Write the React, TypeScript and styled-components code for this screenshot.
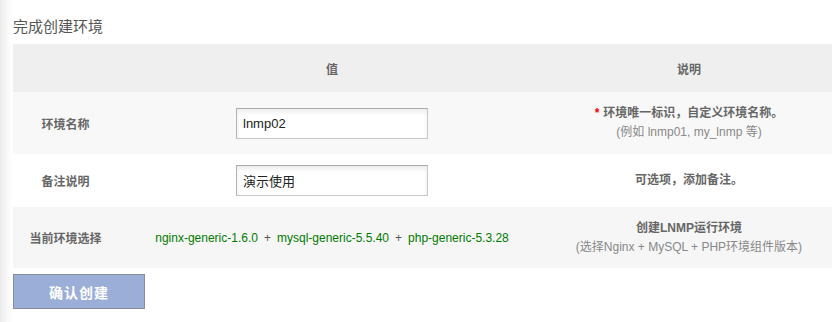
import React from 'react';
import styled, { createGlobalStyle } from 'styled-components';

const GlobalStyle = createGlobalStyle`
  html, body {
    margin: 0;
    padding: 0;
    background: linear-gradient(to right, #ececec 0px, #fafafa 8px, #fff 13px);
    font-family: "Liberation Sans", "Noto Sans CJK SC", sans-serif;
    color: #666;
  }
`;

const rows = [
  {
    id: 'name',
    label: '环境名称',
    value: 'lnmp02',
    note: '环境唯一标识，自定义环境名称。',
    hint: '(例如 lnmp01, my_lnmp 等)',
    required: true,
  },
  {
    id: 'remark',
    label: '备注说明',
    value: '演示使用',
    note: '可选项，添加备注。',
  },
];

const stack = ['nginx-generic-1.6.0', 'mysql-generic-5.5.40', 'php-generic-5.3.28'];

const App = () => {
  return (
    <>
      <GlobalStyle />
      <Page>
        <Title>完成创建环境</Title>
        <Table>
          <colgroup>
            <col style={{ width: 105 }} />
            <col style={{ width: 428 }} />
            <col style={{ width: 286 }} />
          </colgroup>
          <thead>
            <HeadRow>
              <HeadCell />
              <HeadCell>值</HeadCell>
              <HeadCell>说明</HeadCell>
            </HeadRow>
          </thead>
          <tbody>
            {rows.map((r, i) => (
              <Row key={r.id} $shade={i % 2 === 0 ? '#f8f8f8' : '#fff'} $h={i === 0 ? 62 : 53}>
                <Label>{r.label}</Label>
                <Cell>
                  <Input defaultValue={r.value} />
                </Cell>
                <Note>
                  <Strong>
                    {r.required && <Star>*</Star>}
                    {r.note}
                  </Strong>
                  {r.hint && <Hint>{r.hint}</Hint>}
                </Note>
              </Row>
            ))}
            <Row $shade='#f6f6f6' $h={61}>
              <Label>当前环境选择</Label>
              <Cell>
                {stack.map((s, i) => (
                  <React.Fragment key={s}>
                    {i > 0 && <Plus>+</Plus>}
                    <Pkg>{s}</Pkg>
                  </React.Fragment>
                ))}
              </Cell>
              <Note>
                <Strong>创建LNMP运行环境</Strong>
                <Hint>(选择Nginx + MySQL + PHP环境组件版本)</Hint>
              </Note>
            </Row>
          </tbody>
        </Table>
        <Button>确认创建</Button>
      </Page>
    </>
  );
};
export default App;

const Page = styled.div`
  padding: 0 7px 0 13px;
`;

const Title = styled.h3`
  margin: 0;
  padding-top: 18px;
  height: 26px;
  font-size: 15px;
  font-weight: normal;
  line-height: 18px;
  color: #555;
`;

const Table = styled.table`
  width: 819px;
  border-collapse: collapse;
  table-layout: fixed;
`;

const HeadRow = styled.tr`
  background: #efefef;
  height: 48px;
`;

const HeadCell = styled.th`
  padding: 0;
  font-size: 12px;
  font-weight: bold;
  color: #666;
  text-align: center;
`;

const Row = styled.tr<{ $shade: string; $h: number }>`
  background: ${(p) => p.$shade};
  height: ${(p) => p.$h}px;
`;

const Cell = styled.td`
  padding: 0;
  text-align: center;
  font-size: 12px;
  vertical-align: middle;
`;

const Label = styled(Cell)`
  font-weight: bold;
  color: #666;
`;

const Note = styled(Cell)`
  line-height: 19px;
`;

const Strong = styled.div`
  font-weight: bold;
  color: #666;
`;

const Star = styled.span`
  color: #e00;
  margin-right: 4px;
`;

const Hint = styled.div`
  color: #888;
`;

const Input = styled.input`
  box-sizing: border-box;
  width: 192px;
  height: 31px;
  padding: 0 6px;
  border: 1px solid #c8c8c8;
  border-top-color: #aaa;
  border-left-color: #b4b4b4;
  box-shadow: inset 0 3px 4px rgba(0, 0, 0, 0.08);
  background: #fff;
  font-family: "Liberation Sans", "Noto Sans CJK SC", sans-serif;
  font-size: 13px;
  color: #222;
  outline: none;
`;

const Pkg = styled.span`
  color: #007a00;
  font-size: 12px;
`;

const Plus = styled.span`
  color: #555;
  margin: 0 6px;
`;

const Button = styled.button`
  display: block;
  margin-top: 6px;
  width: 132px;
  height: 35px;
  background: #9aaed8;
  border: 1px solid #888c9c;
  color: #fff;
  font-family: "Liberation Sans", "Noto Sans CJK SC", sans-serif;
  font-size: 14px;
  font-weight: bold;
  letter-spacing: 1px;
  cursor: pointer;
`;
